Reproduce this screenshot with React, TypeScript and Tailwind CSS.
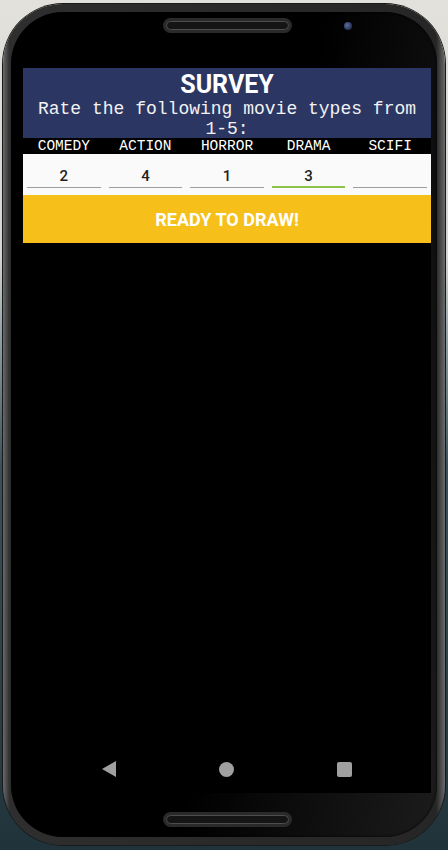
import { useState } from 'react';

const genres = [
  { name: 'COMEDY', value: '2' },
  { name: 'ACTION', value: '4' },
  { name: 'HORROR', value: '1' },
  { name: 'DRAMA', value: '3', focused: true },
  { name: 'SCIFI', value: '' },
];

const mono = { fontFamily: '"Courier New", "Liberation Mono", monospace' };
const sans = { fontFamily: 'Roboto, "Liberation Sans", sans-serif' };

function Speaker() {
  return (
    <div className="h-[15px] w-[129px] rounded-full bg-[#2a2a2a] p-[3px]">
      <div className="h-full w-full rounded-full border border-[#4d4d4d] bg-[#151515]" />
    </div>
  );
}

function NavBar() {
  return (
    <div className="flex h-[48px] items-center justify-center gap-[103px]">
      <svg width="14" height="16" viewBox="0 0 14 16">
        <path d="M14 0 L14 16 L0 8 Z" fill="#a0a0a0" />
      </svg>
      <div className="h-[15px] w-[15px] rounded-full bg-[#a0a0a0]" />
      <div className="h-[15px] w-[15px] rounded-[2px] bg-[#a0a0a0]" />
    </div>
  );
}

export default function App() {
  const [values, setValues] = useState(genres.map((g) => g.value));

  return (
    <div className="h-[850px] w-[448px] overflow-hidden bg-[linear-gradient(180deg,#e3e1dc_0%,#d6d5d1_30%,#8d9ea5_40%,#3b5059_55%,#21333a_100%)] px-[3px] pt-[4px]">
      <div className="h-[841px] rounded-[60px] bg-[linear-gradient(90deg,#6a6a6a_0%,#2e2e2e_1.5%,#262626_98%,#6a6a6a_100%)] p-[8px] shadow-[0_0_0_1px_#1a1a1a]">
        <div className="flex h-[825px] flex-col rounded-[52px] bg-[linear-gradient(100deg,#000_55%,#1c1c1c_100%)] pt-[6px] shadow-[inset_0_0_3px_#000]">
          <div className="flex items-center pl-[152px]">
            <Speaker />
            <div className="ml-[52px] h-[8px] w-[8px] rounded-full bg-[radial-gradient(circle_at_40%_40%,#5d6e9e,#263055_70%)]" />
          </div>

          <div className="ml-[12px] mt-[35px] flex h-[725px] w-[408px] flex-col bg-black">
            <div className="h-[70px] bg-[#2b3662] pt-[3px] text-center text-white">
              <h1 className="text-[25px] font-bold leading-[28px]" style={sans}>
                SURVEY
              </h1>
              <p className="text-[18px] leading-[20px] text-[#f2f2f2]" style={mono}>
                Rate the following movie types from 1-5:
              </p>
            </div>

            <div className="grid grid-cols-5 bg-black">
              {genres.map((g) => (
                <div key={g.name} className="text-center text-[14.5px] leading-[16px] text-white" style={mono}>
                  {g.name}
                </div>
              ))}
            </div>

            <div className="grid grid-cols-5 bg-[#fafafa] pb-[7px] pt-[11px]">
              {genres.map((g, i) => (
                <div key={g.name} className="px-[4px]">
                  <input
                    value={values[i]}
                    onChange={(e) => {
                      const next = [...values];
                      next[i] = e.target.value;
                      setValues(next);
                    }}
                    className={
                      g.focused
                        ? 'block h-[23px] w-full border-b-2 border-[#8bc34a] bg-transparent text-center text-[15px] font-medium leading-[21px] text-[#222] outline-none'
                        : 'block h-[23px] w-full border-b border-[#9e9e9e] bg-transparent pb-px text-center text-[15px] font-medium leading-[21px] text-[#222] outline-none'
                    }
                    style={sans}
                  />
                </div>
              ))}
            </div>

            <button
              className="h-[48px] w-full bg-[#f7bf19] text-[18px] font-bold text-white"
              style={sans}
            >
              READY TO DRAW!
            </button>

            <div className="flex-1" />
            <NavBar />
          </div>

          <div className="mt-[19px] flex justify-center pl-[7px]">
            <Speaker />
          </div>
        </div>
      </div>
    </div>
  );
}
